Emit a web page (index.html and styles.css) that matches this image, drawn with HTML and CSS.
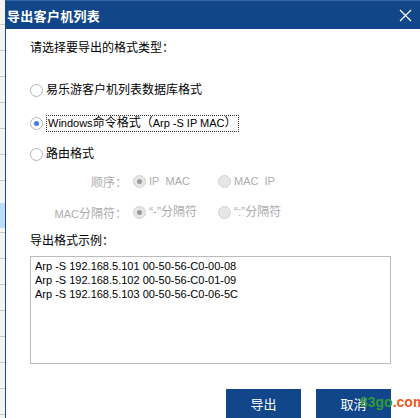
FILE: index.html
```html
<!DOCTYPE html>
<html lang="zh-CN">
<head>
  <meta charset="UTF-8">
  <title>导出客户机列表</title>
  <link rel="stylesheet" href="styles.css">
</head>
<body>
  <div class="screen">
    <div class="backdrop"></div>
    <div class="dialog">
      <div class="titlebar">
        <span class="title">导出客户机列表</span>
        <svg class="close" width="13" height="13" viewBox="0 0 13 13">
          <path d="M1 1 L12 12 M12 1 L1 12" stroke="#ffffff" stroke-width="1.2" fill="none"/>
        </svg>
      </div>
      <div class="content">
        <p class="prompt">请选择要导出的格式类型：</p>

        <label class="option opt-first"><span class="radio"></span>易乐游客户机列表数据库格式</label>
        <label class="option opt-second"><span class="radio checked"></span><span class="focus"><span class="lat">Windows</span>命令格式（<span class="lat">Arp -S IP MAC</span>）</span></label>
        <label class="option opt-third"><span class="radio"></span>路由格式</label>

        <div class="sub-row row-order">
          <span class="sub-label">顺序：</span>
          <label class="option disabled"><span class="radio checked"></span><span class="lat">IP&nbsp; MAC</span></label>
          <label class="option disabled"><span class="radio"></span><span class="lat">MAC&nbsp; IP</span></label>
        </div>
        <div class="sub-row row-sep">
          <span class="sub-label"><span class="lat">MAC</span>分隔符：</span>
          <label class="option disabled"><span class="radio checked"></span>“-”分隔符</label>
          <label class="option disabled"><span class="radio"></span>“:”分隔符</label>
        </div>

        <p class="example-label">导出格式示例：</p>
        <div class="sample">
          <div>Arp -S 192.168.5.101 00-50-56-C0-00-08</div>
          <div>Arp -S 192.168.5.102 00-50-56-C0-01-09</div>
          <div>Arp -S 192.168.5.103 00-50-56-C0-06-5C</div>
        </div>

        <div class="actions">
          <button class="btn">导出</button>
          <button class="btn">取消</button>
        </div>
      </div>
    </div>
    <div class="watermark"><span class="wm-green">83go</span><span class="wm-orange">.com</span></div>
  </div>
</body>
</html>
```

FILE: styles.css
```css
body {
  margin: 0;
  width: 420px;
  height: 418px;
  overflow: hidden;
  background: #ffffff;
  font-family: "Liberation Sans", "Noto Sans CJK SC", sans-serif;
  font-size: 12px;
  color: #000000;
}

.screen {
  position: relative;
  display: flex;
  width: 420px;
  height: 418px;
}

.backdrop {
  width: 5px;
  flex: none;
  background:
    linear-gradient(#bcdcf8, #bcdcf8) 0 203px / 5px 25px no-repeat,
    repeating-linear-gradient(#f4f4f4 0, #f4f4f4 25px, #c8c8c8 25px, #c8c8c8 26px);
  background-position: 0 203px, 0 -1px;
}

.dialog {
  flex: 1;
  display: flex;
  flex-direction: column;
  border-left: 1px solid #1a4a8c;
  background: #ffffff;
}

.titlebar {
  height: 29px;
  flex: none;
  display: flex;
  align-items: center;
  justify-content: space-between;
  background: #12468a;
  border-top: 1px solid #3a67a3;
  box-sizing: border-box;
  padding: 0 8px 0 1px;
}

.title {
  color: #ffffff;
  font-size: 13px;
  font-weight: bold;
  letter-spacing: 0.3px;
}

.content {
  flex: 1;
  padding: 0 0 0 24px;
  display: flex;
  flex-direction: column;
}

.prompt {
  margin: 11px 0 0;
  line-height: 16px;
}

.option {
  display: flex;
  align-items: center;
  height: 18px;
  line-height: 18px;
  white-space: nowrap;
}

.opt-first { margin-top: 25px; }
.opt-second { margin-top: 15px; }
.opt-third { margin-top: 13px; }

.radio {
  width: 11px;
  height: 11px;
  flex: none;
  border: 1px solid #b4b4b4;
  border-radius: 50%;
  background: #ffffff;
  margin-right: 3px;
  position: relative;
}

.radio.checked::after {
  content: "";
  position: absolute;
  left: 3px;
  top: 3px;
  width: 5px;
  height: 5px;
  border-radius: 50%;
  background: #3f7de6;
}

.focus {
  border: 1px dotted #333333;
  padding: 0 1px;
  line-height: 15px;
}

.lat {
  font-size: 11px;
}

.sub-row {
  display: flex;
  align-items: center;
  height: 18px;
}

.row-order { margin-top: 9px; }
.row-sep { margin-top: 13px; }

.sub-label {
  width: 97px;
  text-align: right;
  color: #acacac;
  margin-right: 6px;
}

.option.disabled {
  color: #acacac;
  width: 85px;
}

.option.disabled .radio {
  background: #e6e6e6;
  border-color: #d2d2d2;
}

.option.disabled .radio.checked::after {
  background: #9a9a9a;
}

.example-label {
  margin: 12px 0 0;
  line-height: 16px;
}

.sample {
  margin-top: 7px;
  width: 361px;
  height: 108px;
  box-sizing: border-box;
  border: 1px solid #bcbcbc;
  padding: 2px 4px;
  font-size: 11px;
  line-height: 14px;
}

.actions {
  display: flex;
  justify-content: flex-end;
  gap: 15px;
  width: 361px;
  margin-top: 25px;
}

.btn {
  width: 75px;
  height: 30px;
  border: none;
  background: #12468a;
  color: #ffffff;
  font-family: "Noto Sans CJK SC", sans-serif;
  font-size: 13px;
  padding: 0 0 2px;
}

.watermark {
  position: absolute;
  left: 360px;
  top: 394px;
  font-family: "Liberation Sans", sans-serif;
  font-size: 14px;
  font-weight: bold;
}

.wm-green { color: #2e9a3a; }
.wm-orange { color: #f05a28; }
```
